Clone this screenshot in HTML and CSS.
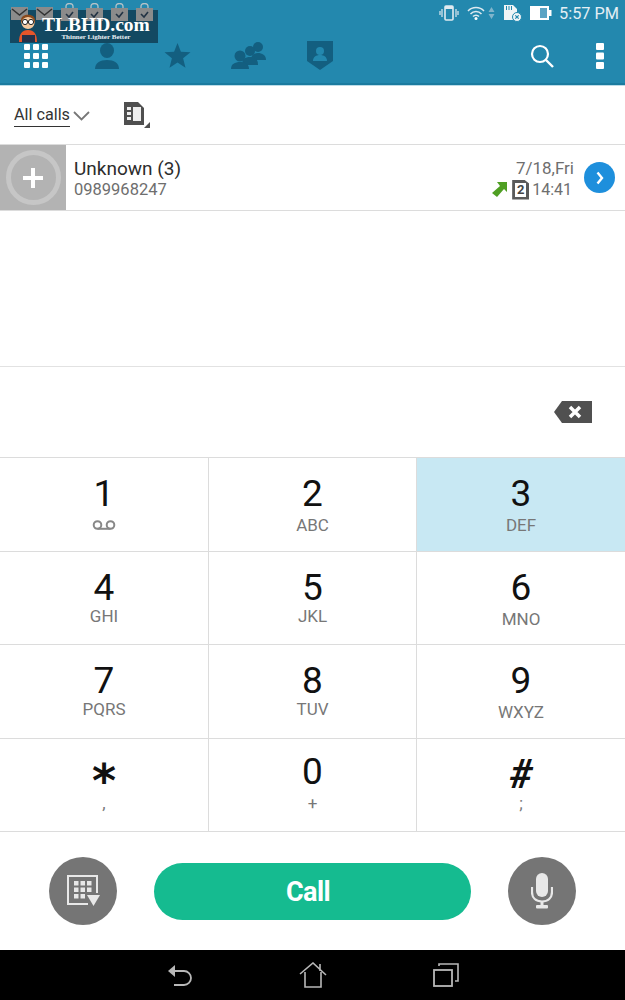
FILE: index.html
```html
<!DOCTYPE html>
<html>
<head>
	<title>Phone</title>
	<link rel="stylesheet" href="styles.css">
</head>
<body>
	<div class="phone">
		<header class="top">
			<div class="status">
				<div class="notes">
					<svg class="mail" width="19" height="15" viewBox="0 0 19 15"><rect x="1" y="1" width="17" height="13" fill="#8b8b8b"/><path d="M2 3l7.500 6 7.500-6" fill="none" stroke="#333" stroke-width="1.500"/></svg>
					<svg class="mail" width="19" height="15" viewBox="0 0 19 15"><rect x="1" y="1" width="17" height="13" fill="#8b8b8b"/><path d="M2 3l7.500 6 7.500-6" fill="none" stroke="#333" stroke-width="1.500"/></svg>
					<svg width="19" height="18" viewBox="0 0 19 18"><path d="M6 6V3.500a3.500 3 0 0 1 7 0V6" fill="none" stroke="#b5c2c8" stroke-width="1.300"/><rect x="1" y="5" width="17" height="13" fill="#8b8b8b"/><path d="M6 11l3 3 4-5" fill="none" stroke="#234" stroke-width="1.600"/></svg>
					<svg width="19" height="18" viewBox="0 0 19 18"><path d="M6 6V3.500a3.500 3 0 0 1 7 0V6" fill="none" stroke="#b5c2c8" stroke-width="1.300"/><rect x="1" y="5" width="17" height="13" fill="#8b8b8b"/><path d="M6 11l3 3 4-5" fill="none" stroke="#234" stroke-width="1.600"/></svg>
					<svg width="19" height="18" viewBox="0 0 19 18"><path d="M6 6V3.500a3.500 3 0 0 1 7 0V6" fill="none" stroke="#b5c2c8" stroke-width="1.300"/><rect x="1" y="5" width="17" height="13" fill="#8b8b8b"/><path d="M6 11l3 3 4-5" fill="none" stroke="#234" stroke-width="1.600"/></svg>
					<svg width="19" height="18" viewBox="0 0 19 18"><path d="M6 6V3.500a3.500 3 0 0 1 7 0V6" fill="none" stroke="#b5c2c8" stroke-width="1.300"/><rect x="1" y="5" width="17" height="13" fill="#8b8b8b"/><path d="M6 11l3 3 4-5" fill="none" stroke="#234" stroke-width="1.600"/></svg>
				</div>
				<div class="sysicons">
					<svg width="20" height="16" viewBox="0 0 20 16"><rect x="6" y="1" width="8" height="14" rx="1" fill="none" stroke="#dfeaf0" stroke-width="1.600"/><rect x="6" y="1" width="8" height="3" fill="#dfeaf0"/><path d="M3 4v8M1 6v4M17 4v8M19 6v4" stroke="#dfeaf0" stroke-width="1.200"/></svg>
					<svg class="wifi" width="18" height="14" viewBox="0 0 18 14"><path d="M1 5a11 11 0 0 1 16 0M3.500 8a7.500 7.500 0 0 1 11 0M6 10.500a4 4 0 0 1 6 0" fill="none" stroke="#dfeaf0" stroke-width="1.500"/><circle cx="9" cy="12.500" r="1.500" fill="#fff"/></svg>
					<svg class="updown" width="7" height="14" viewBox="0 0 7 14"><path d="M3.500 1L6.500 6H.5zM3.500 13L.5 8h6z" fill="#7fb4cb"/></svg>
					<svg class="sd" width="19" height="18" viewBox="0 0 19 18"><path d="M1 1h9l4 4v11H1z" fill="#f0f4f6"/><path d="M3.500 2v4M6 2v4M8.500 2v4" stroke="#2388ae"/><circle cx="14" cy="13" r="4.500" fill="#f0f4f6" stroke="#2388ae"/><path d="M12.300 11.300l3.400 3.400M15.700 11.300l-3.400 3.400" stroke="#2388ae" stroke-width="1.200"/></svg>
					<svg class="batt" width="22" height="14" viewBox="0 0 22 14"><rect x="0" y="0" width="19" height="14" fill="#fff"/><rect x="10" y="2" width="7" height="10" fill="#5ba4c4"/><rect x="19" y="4" width="2.500" height="6" fill="#fff"/></svg>
					<span class="time">5:57 PM</span>
				</div>
			</div>
			<div class="tabs">
				<div class="tabs-left">
					<span class="tab"><svg width="24" height="24" viewBox="0 0 24 24"><g fill="#fff"><rect x="0" y="0" width="6" height="6" rx="1"/><rect x="9" y="0" width="6" height="6" rx="1"/><rect x="18" y="0" width="6" height="6" rx="1"/><rect x="0" y="9" width="6" height="6" rx="1"/><rect x="9" y="9" width="6" height="6" rx="1"/><rect x="18" y="9" width="6" height="6" rx="1"/><rect x="0" y="18" width="6" height="6" rx="1"/><rect x="9" y="18" width="6" height="6" rx="1"/><rect x="18" y="18" width="6" height="6" rx="1"/></g></svg></span>
					<span class="tab"><svg width="24" height="26" viewBox="0 0 24 26"><ellipse cx="12" cy="7.500" rx="7" ry="7.500" fill="#135f80"/><path d="M0 26c0-6 5-9 12-9s12 3 12 9z" fill="#135f80"/></svg></span>
					<span class="tab"><svg width="27" height="25" viewBox="0 0 27 25"><path d="M13.500 0l3.400 8.700 9.600.6-7.400 6 2.400 9.400-8-5.200-8 5.200 2.400-9.400-7.400-6 9.600-.6z" fill="#135f80"/></svg></span>
					<span class="tab"><svg width="35" height="27" viewBox="0 0 35 27"><g fill="#135f80"><circle cx="27" cy="5" r="5"/><path d="M20 18c0-5 3-7 7-7s8 2 8 7z"/><circle cx="19" cy="9" r="5"/><path d="M11 23c0-6 3-8 8-8s8 2 8 8z"/><circle cx="9" cy="14" r="5.500"/><path d="M0 27c0-5 4-7 9-7s9 2 9 7z"/></g></svg></span>
					<span class="tab"><svg width="26" height="29" viewBox="0 0 26 29"><path d="M0 0h26v20l-13 9-13-9z" fill="#135f80"/><circle cx="13" cy="10" r="4" fill="#2388ae"/><path d="M6 20c0-4 3-6 7-6s7 2 7 6z" fill="#2388ae"/></svg></span>
				</div>
				<div class="tabs-right">
					<svg width="24" height="24" viewBox="0 0 24 24"><circle cx="10" cy="10" r="8" fill="none" stroke="#fff" stroke-width="2.200"/><path d="M16 16l7 7" stroke="#fff" stroke-width="2.400"/></svg>
					<svg class="more" width="8" height="26" viewBox="0 0 8 26"><g fill="#fff"><rect width="8" height="7" rx="1"/><rect y="9.500" width="8" height="7" rx="1"/><rect y="19" width="8" height="7" rx="1"/></g></svg>
				</div>
			</div>
			<div class="logo">
				<svg class="mascot" width="20" height="30" viewBox="0 0 20 30"><path d="M3 8C3 1 17 1 17 8v3H3z" fill="#8a4a1c"/><ellipse cx="10" cy="11" rx="6.500" ry="6" fill="#f3c9a0"/><circle cx="7" cy="10" r="2.600" fill="#fff" stroke="#222"/><circle cx="13" cy="10" r="2.600" fill="#fff" stroke="#222"/><path d="M1 30c0-8 3-12 9-12s9 4 9 12z" fill="#e8552a"/><rect x="4" y="23" width="13" height="7" fill="#26324a"/></svg>
				<div class="logo-text">
					<span class="logo-name">TLBHD.com</span>
					<span class="logo-sub">Thinner Lighter Better</span>
				</div>
			</div>
		</header>

		<div class="filter">
			<span class="allcalls">All calls</span>
			<svg class="chev" width="17" height="10" viewBox="0 0 17 10"><path d="M1 1l7.500 7.500L16 1" fill="none" stroke="#777" stroke-width="1.800"/></svg>
			<svg class="simbtn" width="27" height="27" viewBox="0 0 27 27"><path d="M1 1h14l6 6v17H1z" fill="#4f4f4f"/><rect x="4" y="6" width="4" height="3" fill="#eee"/><rect x="4" y="11" width="4" height="3" fill="#eee"/><rect x="4" y="16" width="4" height="3" fill="#eee"/><rect x="10" y="6" width="8" height="14" fill="#eee"/><path d="M27 21v6h-6z" fill="#4f4f4f"/></svg>
		</div>

		<div class="callrow">
			<div class="avatar">
				<div class="ring"><span class="plus"></span></div>
			</div>
			<div class="callinfo">
				<div class="callname">Unknown (3)</div>
				<div class="callnum">0989968247</div>
			</div>
			<div class="callmeta">
				<div class="calldate">7/18,Fri</div>
				<div class="calltime">
					<svg width="15" height="15" viewBox="0 0 15 15"><path d="M5 0h10v10l-3-3-7 8-5-4 8-7z" fill="#4f9f23"/></svg>
					<span class="simtag">2</span>
					<span>14:41</span>
				</div>
			</div>
			<div class="go">
				<svg width="8" height="14" viewBox="0 0 8 14"><path d="M1.500 1.500L6 7l-4.500 5.500" fill="none" stroke="#fff" stroke-width="2.400"/></svg>
			</div>
		</div>

		<div class="results"></div>

		<div class="entry">
			<svg width="38" height="22" viewBox="0 0 38 22"><path d="M8 0h30v22H8L0 11z" fill="#505050"/><path d="M16 6l10 10M26 6L16 16" stroke="#fff" stroke-width="3.500"/></svg>
		</div>

		<div class="keypad">
			<div class="key"><span class="digit">1</span><span class="sub"><svg width="24" height="10" viewBox="0 0 24 10"><circle cx="5.500" cy="5" r="3.800" fill="none" stroke="#888" stroke-width="2"/><circle cx="18.500" cy="5" r="3.800" fill="none" stroke="#888" stroke-width="2"/><path d="M5.500 8.800h13" stroke="#888" stroke-width="2"/></svg></span></div>
			<div class="key"><span class="digit">2</span><span class="sub">ABC</span></div>
			<div class="key on"><span class="digit">3</span><span class="sub">DEF</span></div>
			<div class="key"><span class="digit">4</span><span class="sub tight">GHI</span></div>
			<div class="key"><span class="digit">5</span><span class="sub tight">JKL</span></div>
			<div class="key"><span class="digit">6</span><span class="sub">MNO</span></div>
			<div class="key"><span class="digit">7</span><span class="sub tight">PQRS</span></div>
			<div class="key"><span class="digit">8</span><span class="sub tight">TUV</span></div>
			<div class="key"><span class="digit">9</span><span class="sub">WXYZ</span></div>
			<div class="key last"><span class="digit star">*</span><span class="sub">,</span></div>
			<div class="key last"><span class="digit">0</span><span class="sub">+</span></div>
			<div class="key last"><span class="digit hash">#</span><span class="sub">;</span></div>
		</div>

		<div class="actions">
			<div class="round">
				<svg width="33" height="32" viewBox="0 0 33 32"><path d="M21 29H1V1h29v17" fill="none" stroke="#e8e8e8" stroke-width="2"/><g fill="#e8e8e8"><rect x="7" y="6" width="4.500" height="4.500"/><rect x="13.500" y="6" width="4.500" height="4.500"/><rect x="20" y="6" width="4.500" height="4.500"/><rect x="7" y="12.500" width="4.500" height="4.500"/><rect x="13.500" y="12.500" width="4.500" height="4.500"/><rect x="20" y="12.500" width="4.500" height="4.500"/><rect x="7" y="19" width="4.500" height="4.500"/><rect x="13.500" y="19" width="4.500" height="4.500"/></g><path d="M20 20h13l-6.500 11z" fill="#e8e8e8"/></svg>
			</div>
			<div class="callbtn">Call</div>
			<div class="round">
				<svg width="22" height="36" viewBox="0 0 22 36"><rect x="5" y="0" width="12" height="24" rx="6" fill="#e8e8e8"/><path d="M1 14v5c0 6 4 9.500 10 9.500S21 25 21 19v-5" fill="none" stroke="#e8e8e8" stroke-width="2.200"/><path d="M11 28v5" stroke="#e8e8e8" stroke-width="3"/><rect x="5" y="32" width="12" height="3.500" rx="1" fill="#e8e8e8"/></svg>
			</div>
		</div>

		<nav class="navbar">
			<svg width="26" height="24" viewBox="0 0 26 24"><path d="M8 8h9a6.500 6.500 0 0 1 0 14H7" fill="none" stroke="#b8b8b8" stroke-width="1.800"/><path d="M1 8l7-6v12z" fill="#b8b8b8"/></svg>
			<svg width="28" height="26" viewBox="0 0 28 26"><path d="M1 12L14 1l13 12M6 10v15h16V10M21 2v7" fill="none" stroke="#b8b8b8" stroke-width="1.600"/></svg>
			<svg width="26" height="24" viewBox="0 0 26 24"><rect x="1" y="7" width="18" height="16" fill="none" stroke="#b8b8b8" stroke-width="1.800"/><path d="M6 3V1h19v17h-3" fill="none" stroke="#b8b8b8" stroke-width="1.600"/></svg>
		</nav>
	</div>
</body>
</html>
```

FILE: styles.css
```css
* {
	box-sizing: border-box;
}
body {
	margin: 0;
	font-family: Roboto, sans-serif;
	background: #fff;
}
.phone {
	position: relative;
	width: 625px;
	height: 1000px;
	display: flex;
	flex-direction: column;
	overflow: hidden;
}

/* top bar */
.top {
	position: relative;
	height: 85px;
	background: #2388ae;
	border-bottom: 2px solid #1b7b9f;
	box-shadow: 0 1px 0 #bcdce8;
}
.status {
	display: flex;
	justify-content: space-between;
	align-items: center;
	height: 26px;
	padding: 0 6px 0 10px;
}
.notes {
	position: relative;
	z-index: 1;
	display: flex;
	align-self: flex-start;
	align-items: flex-end;
	gap: 6px;
	padding-top: 3px;
}
.sysicons {
	display: flex;
	align-items: center;
	gap: 6px;
}
.wifi {
	margin-left: 2px;
}
.updown {
	margin-left: -3px;
}
.sd {
	margin-left: 2px;
}
.batt {
	margin-left: 2px;
}
.time {
	margin-left: 1px;
	font-size: 16.300px;
	color: #e4eff4;
}
.tabs {
	display: flex;
	justify-content: space-between;
	align-items: center;
	height: 57px;
	padding: 2px 21px 0 0;
}
.tabs-left {
	display: flex;
	align-items: center;
}
.tab {
	display: flex;
	justify-content: center;
	width: 71px;
}
.tabs-right {
	display: flex;
	align-items: center;
	gap: 42px;
}
.logo {
	position: absolute;
	left: 10px;
	top: 10px;
	width: 148px;
	height: 33px;
	display: flex;
	align-items: center;
	background: rgba(16, 60, 82, 0.82);
	padding-left: 8px;
}
.mascot {
	position: relative;
	z-index: 2;
}
.logo-text {
	position: relative;
	z-index: 2;
	display: flex;
	flex-direction: column;
	align-items: center;
	align-self: flex-end;
	margin-left: 4px;
	padding-bottom: 2px;
}
.logo-name {
	font-family: "Liberation Serif", serif;
	font-weight: bold;
	font-size: 19.500px;
	line-height: 22px;
	color: #fff;
	white-space: nowrap;
}
.logo-sub {
	margin-top: -3px;
	font-family: "Liberation Serif", serif;
	font-weight: bold;
	font-size: 7px;
	line-height: 8px;
	color: #e8eef2;
	white-space: nowrap;
}

/* filter */
.filter {
	display: flex;
	align-items: center;
	height: 60px;
	padding: 0 0 0 14px;
	border-bottom: 1px solid #dcdcdc;
}
.allcalls {
	font-size: 16.200px;
	line-height: 23px;
	color: #333;
	border-bottom: 1px solid #333;
}
.chev {
	margin: 3px 0 0 3px;
}
.simbtn {
	margin: 0 0 0 33px;
}

/* call row */
.callrow {
	display: flex;
	align-items: center;
	height: 66px;
	border-bottom: 1px solid #dcdcdc;
}
.avatar {
	display: flex;
	align-items: center;
	justify-content: center;
	width: 66px;
	height: 65px;
	background: #b3b3b3;
}
.ring {
	display: flex;
	align-items: center;
	justify-content: center;
	width: 55px;
	height: 55px;
	border: 5px solid #c6c6c6;
	border-radius: 50%;
}
.plus {
	position: relative;
	width: 20px;
	height: 20px;
	background:
		linear-gradient(#fff, #fff) center / 20px 4px no-repeat,
		linear-gradient(#fff, #fff) center / 4px 20px no-repeat;
}
.callinfo {
	flex: 1;
	margin-top: 2px;
	padding-left: 8px;
}
.callname {
	font-size: 19px;
	line-height: 22px;
	color: #2d2d2d;
}
.callnum {
	font-size: 16.500px;
	line-height: 20px;
	color: #6e6e6e;
}
.callmeta {
	margin-top: 2px;
	text-align: right;
	color: #6e6e6e;
	font-size: 16px;
}
.calldate {
	font-size: 17px;
	line-height: 22px;
}
.calltime {
	display: flex;
	align-items: center;
	gap: 5px;
	line-height: 22px;
	padding-right: 2px;
}
.simtag {
	display: block;
	width: 17px;
	height: 20px;
	margin-right: -2px;
	background: #fff;
	border: 3px solid #5a5a5a;
	clip-path: polygon(0 0, 70% 0, 100% 20%, 100% 100%, 0 100%);
	color: #444;
	text-align: center;
	font-size: 13px;
	font-weight: bold;
	line-height: 14px;
}
.go {
	display: flex;
	align-items: center;
	justify-content: center;
	width: 31px;
	height: 31px;
	margin: 0 10px;
	background: #1e8fdc;
	border-radius: 50%;
}

.results {
	height: 156px;
	border-bottom: 1px solid #e2e2e2;
}

/* number entry */
.entry {
	display: flex;
	align-items: center;
	justify-content: flex-end;
	height: 91px;
	padding: 0 33px 0 0;
	border-bottom: 1px solid #dcdcdc;
}

/* keys */
.keypad {
	display: grid;
	grid-template-columns: 209px 208px 208px;
	grid-auto-rows: 93.500px;
}
.key {
	display: flex;
	flex-direction: column;
	align-items: center;
	justify-content: center;
	border-right: 1px solid #dcdcdc;
	border-bottom: 1px solid #dcdcdc;
}
.key:nth-child(3n) {
	border-right: 0;
}
.key.on {
	background: #c8e8f3;
}
.key.last {
	padding-bottom: 4px;
}
.key.last .digit {
	margin-top: -2px;
}
.digit {
	height: 42px;
	font-size: 37px;
	line-height: 42px;
	color: #111;
}
.key.last .star {
	margin-top: 4px;
	margin-bottom: -6px;
	font-family: "DejaVu Sans", sans-serif;
	font-size: 46px;
	font-weight: bold;
	line-height: 48px;
}
.key.last .hash {
	margin-top: 1px;
	margin-bottom: -3px;
	font-size: 40px;
	font-weight: bold;
	font-style: italic;
}
.sub {
	display: flex;
	align-items: center;
	justify-content: center;
	height: 20px;
	font-size: 17px;
	color: #777;
}
.sub.tight {
	margin-top: -3px;
	margin-bottom: 3px;
}

/* bottom actions */
.actions {
	display: flex;
	align-items: center;
	justify-content: space-between;
	flex: 1;
	padding: 0 49px;
}
.round {
	display: flex;
	align-items: center;
	justify-content: center;
	width: 68px;
	height: 68px;
	background: #757575;
	border-radius: 50%;
}
.callbtn {
	width: 317px;
	height: 57px;
	padding-right: 9px;
	background: #15bb90;
	border-radius: 29px;
	text-align: center;
	font-size: 27px;
	font-weight: 700;
	letter-spacing: -0.6px;
	line-height: 59px;
	color: #fff;
}
.navbar {
	display: flex;
	align-items: center;
	justify-content: center;
	gap: 106px;
	height: 50px;
	background: #000;
}
```
